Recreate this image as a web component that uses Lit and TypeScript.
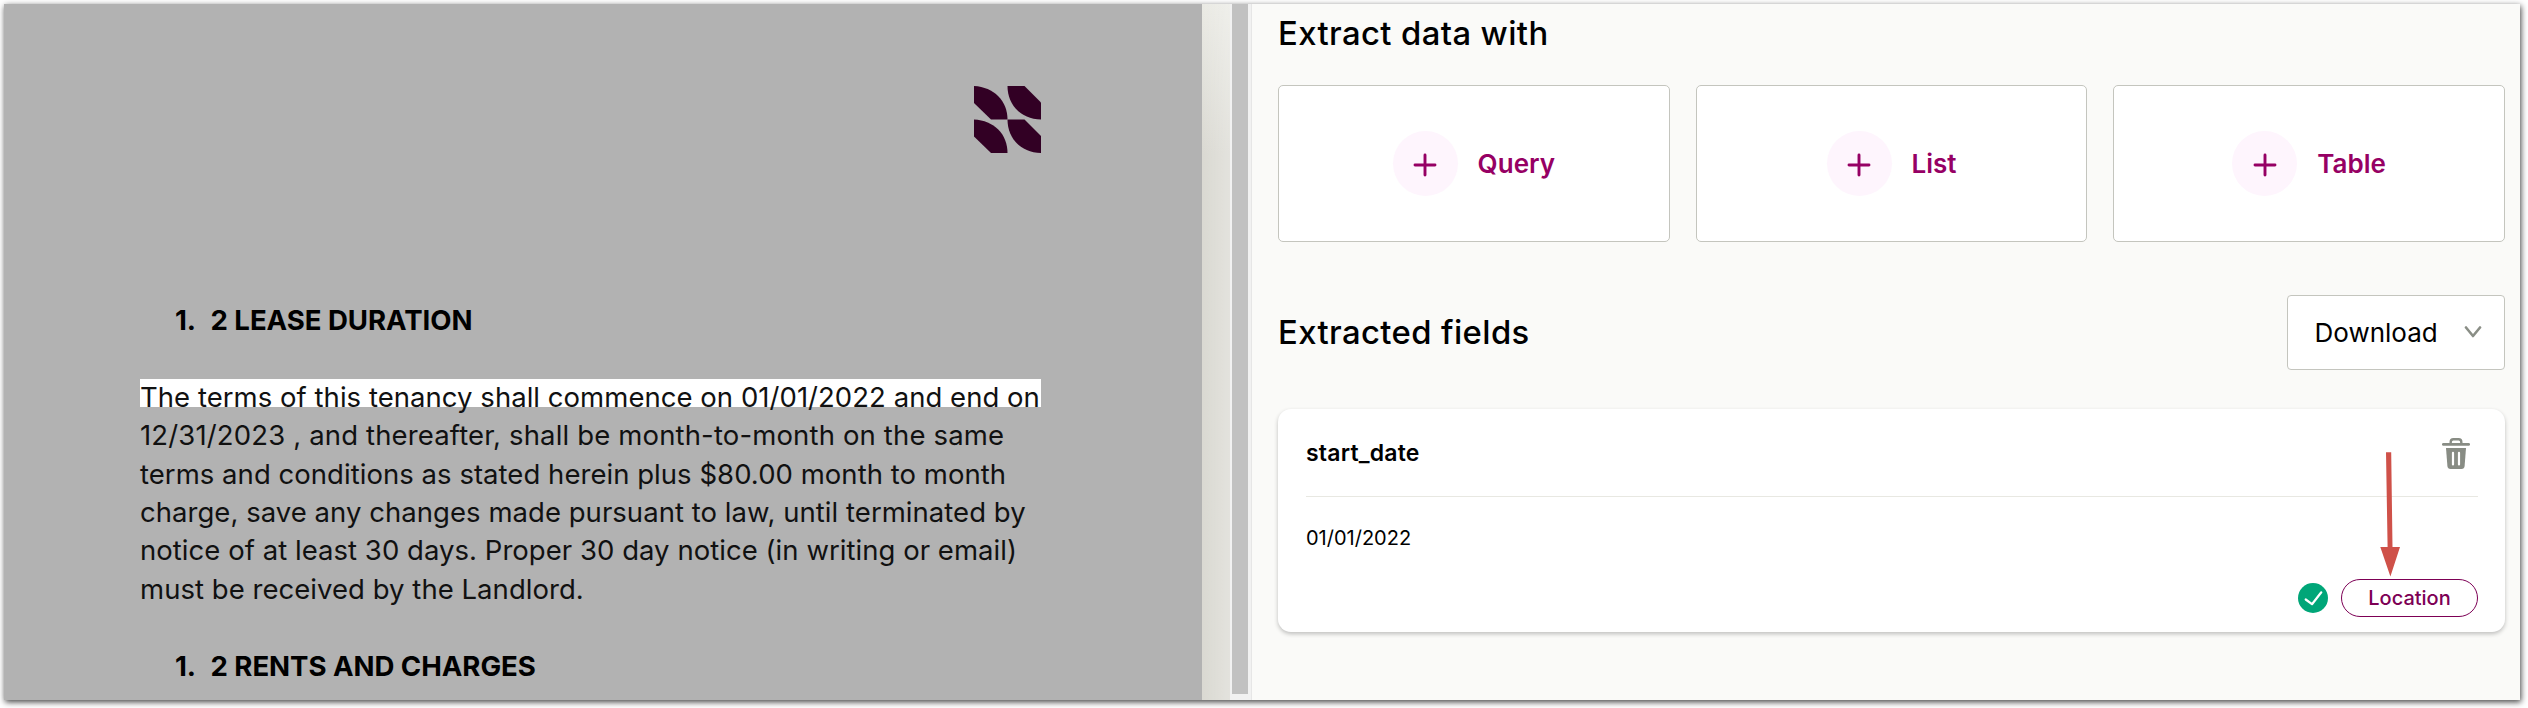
import { LitElement, html, css } from "lit";
import { customElement, property } from "lit/decorators.js";

@customElement("lease-document")
export class LeaseDocument extends LitElement {
  static styles = css`
    :host {
      display: block;
      box-sizing: border-box;
      width: 1197.5px;
      padding: 82.3px 160.5px 0 136px;
      background: #b2b2b2;
      color: #111;
      font-size: 27.5px;
      line-height: 38.4px;
      letter-spacing: 0.04px;
      overflow: hidden;
    }
    .logo {
      display: block;
      width: 67px;
      height: 67px;
      margin: 0 0 148px auto;
    }
    h2 {
      display: flex;
      gap: 14.5px;
      margin: 0;
      padding-left: 35px;
      font-size: 27.6px;
      font-weight: 700;
      line-height: 38.5px;
      letter-spacing: -0.05px;
      color: #000;
    }
    .body {
      margin: 38px 0 38.6px;
    }
    .line {
      white-space: nowrap;
    }
    .spread {
      letter-spacing: 0.15px;
    }
    .marked {
      background: linear-gradient(#fff, #fff) 0 1px / 100% 28px no-repeat;
    }
  `;

  private lines = [
    "terms and conditions as stated herein plus $80.00 month to month",
    "charge, save any changes made pursuant to law, until terminated by",
    "notice of at least 30 days. Proper 30 day notice (in writing or email)",
    "must be received by the Landlord.",
  ];

  render() {
    return html`
      <svg class="logo" viewBox="0 0 67 67" fill="#320024">
        <path d="M0 0C20 1 33.500 15 33.500 33.500H17L0 17Z" />
        <path d="M33.500 0H50.500L67 16.500V33.500C47 33 33.500 19 33.500 0Z" />
        <path d="M0 33.500C20 34.500 33.500 48 33.500 67H17L0 50.500Z" />
        <path d="M33.500 33.500H50.500L67 50V67C47 66.500 33.500 52.500 33.500 33.500Z" />
      </svg>
      <h2><span>1.</span><span>2 LEASE DURATION</span></h2>
      <div class="body">
        <div class="line marked">The terms of this tenancy shall commence on 01/01/2022 and end on</div>
        <div class="line spread">12/31/2023 , and thereafter, shall be month-to-month on the same</div>
        ${this.lines.map((l) => html`<div class="line">${l}</div>`)}
      </div>
      <h2><span>1.</span><span>2 RENTS AND CHARGES</span></h2>
    `;
  }
}

@customElement("extract-option")
export class ExtractOption extends LitElement {
  @property() label = "";
  static styles = css`
    :host {
      display: flex;
      align-items: center;
      justify-content: center;
      gap: 20px;
      box-sizing: border-box;
      height: 156.7px;
      border: 1px solid #c4c5be;
      border-radius: 5px;
      background: #fff;
      color: #960064;
      font-size: 26px;
      font-weight: 600;
    }
    .disc {
      display: flex;
      align-items: center;
      justify-content: center;
      width: 65px;
      height: 65px;
      border-radius: 50%;
      background: #fef5fd;
    }
    svg {
      padding-top: 4px;
    }
  `;
  render() {
    return html`
      <span class="disc">
        <svg width="24" height="24" viewBox="0 0 24 24" stroke="#960064" stroke-width="2.9" stroke-linecap="round">
          <path d="M12 2V22M2 12H22" />
        </svg>
      </span>
      <span>${this.label}</span>
    `;
  }
}

@customElement("field-card")
export class FieldCard extends LitElement {
  @property() name = "";
  @property() value = "";
  static styles = css`
    :host {
      display: block;
      position: relative;
      box-sizing: border-box;
      height: 223.3px;
      padding: 0 27px 0 28px;
      border-radius: 13px;
      background: #fff;
      box-shadow: 0 2px 4px rgba(0, 0, 0, 0.24);
    }
    .head {
      display: flex;
      align-items: center;
      justify-content: space-between;
      box-sizing: border-box;
      height: 88.3px;
      padding-right: 8.5px;
      border-bottom: 1px solid #e8e8e2;
      font-size: 23px;
      font-weight: 600;
      letter-spacing: 0.2px;
    }
    .name {
      padding-top: 2px;
    }
    .trash {
      margin-top: 3px;
    }
    .value {
      margin: 25.7px 0 26.3px;
      font-size: 20px;
      line-height: 30px;
    }
    .actions {
      display: flex;
      align-items: center;
      justify-content: flex-end;
      gap: 13px;
    }
    button {
      box-sizing: border-box;
      width: 137px;
      height: 38px;
      padding: 0;
      border: 1px solid #7d0055;
      border-radius: 19px;
      background: #fff;
      color: #7d0055;
      font: 500 20px "Inter", sans-serif;
    }
    .arrow {
      position: absolute;
      left: 1102px;
      top: 43px;
    }
  `;
  render() {
    return html`
      <div class="head">
        <span class="name">${this.name}</span>
        <svg class="trash" width="28" height="31" viewBox="0 0 28 31">
          <path d="M8.700 6V4Q8.700 1.300 11.400 1.300H16.600Q19.300 1.300 19.300 4V6" fill="none" stroke="#888c84" stroke-width="2.400" />
          <path d="M1.300 6.400H26.700" stroke="#888c84" stroke-width="2.700" stroke-linecap="round" />
          <path d="M4 10H24L22.600 28Q22.300 31 19.500 31H8.500Q5.700 31 5.400 28Z" fill="#888c84" />
          <path d="M11 14.800V26.500M17 14.800V26.500" stroke="#fff" stroke-width="2.200" stroke-linecap="round" />
        </svg>
      </div>
      <div class="value">${this.value}</div>
      <div class="actions">
        <svg width="30" height="30" viewBox="0 0 30 30">
          <circle cx="15" cy="15" r="15" fill="#00a678" />
          <path d="M7.700 16.500L14 21.200L23.300 9.300" fill="none" stroke="#fff" stroke-width="2.200" stroke-linecap="round" stroke-linejoin="round" />
        </svg>
        <button>Location</button>
      </div>
      <svg class="arrow" width="20" height="125" viewBox="0 0 20 125" fill="#cf5149">
        <path d="M6 0.300H11.200L12.500 95H20L10.400 124.500L0.300 95H7.600Z" />
      </svg>
    `;
  }
}

@customElement("app-root")
export class AppRoot extends LitElement {
  static styles = css`
    :host {
      display: block;
      box-sizing: border-box;
      height: 708px;
      padding: 4px 8px 8px 4px;
      background: #fff;
      overflow: hidden;
      font-family: "Inter", sans-serif;
      color: #000;
    }
    .frame {
      display: flex;
      height: 696px;
      background: #fafaf8;
      box-shadow: 1px 2px 6px rgba(0, 0, 0, 0.75);
    }
    lease-document {
      flex: none;
    }
    .gutter {
      flex: none;
      width: 28.5px;
      background: linear-gradient(90deg, rgba(255, 255, 255, 0), rgba(255, 255, 255, 0.25)),
        linear-gradient(#eaeae4, #dad9d2 150px, #dad9d2);
    }
    .track {
      flex: none;
      box-sizing: border-box;
      width: 22px;
      padding: 0 3px 6px 2px;
      border-right: 1px solid #e6e6e6;
      background: #f1f1f1;
    }
    .thumb {
      height: 100%;
      background: #c1c1c1;
    }
    .panel {
      flex: 1;
      padding: 9px 15px 0 26px;
    }
    h1 {
      margin: 0;
      font-size: 32.8px;
      font-weight: 500;
      line-height: 40px;
      letter-spacing: 0.4px;
    }
    .options {
      display: grid;
      grid-template-columns: repeat(3, 1fr);
      gap: 26px;
      margin: 32px 0 53.3px;
    }
    .bar {
      display: flex;
      align-items: center;
      justify-content: space-between;
      margin-bottom: 38.7px;
    }
    .download {
      display: flex;
      align-items: center;
      justify-content: space-between;
      box-sizing: border-box;
      width: 218px;
      height: 75px;
      padding: 0 22px 0 26.5px;
      border: 1px solid #c4c5be;
      border-radius: 4px;
      background: #fff;
      font-size: 26px;
    }
  `;
  render() {
    return html`
      <div class="frame">
        <lease-document></lease-document>
        <div class="gutter"></div>
        <div class="track"><div class="thumb"></div></div>
        <section class="panel">
          <h1>Extract data with</h1>
          <div class="options">
            ${["Query", "List", "Table"].map((l) => html`<extract-option label=${l}></extract-option>`)}
          </div>
          <div class="bar">
            <h1>Extracted fields</h1>
            <div class="download">
              <span>Download</span>
              <svg width="18" height="12" viewBox="0 0 18 12">
                <path d="M2 1.500L9 10L16 1.500" fill="none" stroke="#8a8e86" stroke-width="2.600" stroke-linecap="round" stroke-linejoin="round" />
              </svg>
            </div>
          </div>
          <field-card name="start_date" value="01/01/2022"></field-card>
        </section>
      </div>
    `;
  }
}
